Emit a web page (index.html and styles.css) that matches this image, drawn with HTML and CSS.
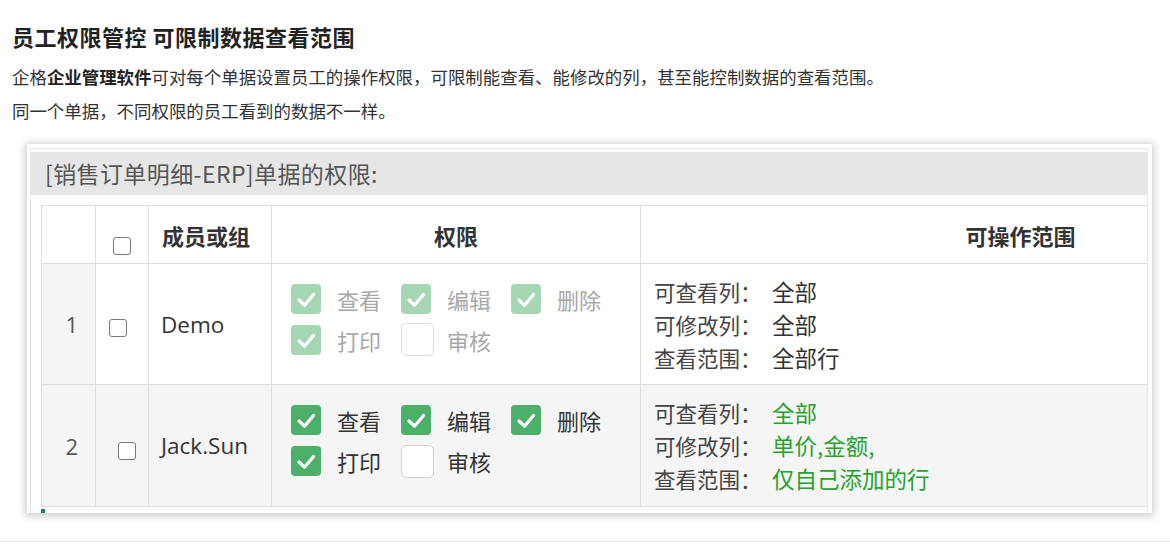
FILE: index.html
```html
<!DOCTYPE html>
<html lang="zh-CN">
<head>
<meta charset="utf-8">
<title>员工权限管控</title>
<link rel="stylesheet" href="styles.css">
</head>
<body>
<main class="page">
  <h1 class="title">员工权限管控 可限制数据查看范围</h1>
  <p class="desc">企格<strong>企业管理软件</strong>可对每个单据设置员工的操作权限，可限制能查看、能修改的列，甚至能控制数据的查看范围。</p>
  <p class="desc">同一个单据，不同权限的员工看到的数据不一样。</p>

  <div class="shot">
    <div class="window">
      <div class="bar">[销售订单明细-ERP]单据的权限:</div>
      <div class="table-wrap">
        <table class="perm">
          <colgroup>
            <col class="c-no"><col class="c-chk"><col class="c-name"><col class="c-perm"><col class="c-scope">
          </colgroup>
          <thead>
            <tr>
              <th class="no"></th>
              <th class="chk"><span class="sbox head-box"></span></th>
              <th class="name">成员或组</th>
              <th class="center">权限</th>
              <th class="center">可操作范围</th>
            </tr>
          </thead>
          <tbody>
            <tr class="r1">
              <td class="no">1</td>
              <td class="chk"><span class="sbox box-r1"></span></td>
              <td class="name">Demo</td>
              <td class="perms">
                <div class="grid faded">
                  <div class="item"><span class="gbox"><svg viewBox="0 0 30 30"><path d="M8 16 L13.5 21.2 L22.5 10.5"/></svg></span><span class="lbl">查看</span></div>
                  <div class="item"><span class="gbox"><svg viewBox="0 0 30 30"><path d="M8 16 L13.5 21.2 L22.5 10.5"/></svg></span><span class="lbl">编辑</span></div>
                  <div class="item"><span class="gbox"><svg viewBox="0 0 30 30"><path d="M8 16 L13.5 21.2 L22.5 10.5"/></svg></span><span class="lbl">删除</span></div>
                  <div class="item"><span class="gbox"><svg viewBox="0 0 30 30"><path d="M8 16 L13.5 21.2 L22.5 10.5"/></svg></span><span class="lbl">打印</span></div>
                  <div class="item"><span class="ebox"></span><span class="lbl">审核</span></div>
                </div>
              </td>
              <td class="scope">
                <div class="line"><span class="k">可查看列：</span><span class="v">全部</span></div>
                <div class="line"><span class="k">可修改列：</span><span class="v">全部</span></div>
                <div class="line"><span class="k">查看范围：</span><span class="v">全部行</span></div>
              </td>
            </tr>
            <tr class="r2">
              <td class="no">2</td>
              <td class="chk"><span class="sbox box-r2"></span></td>
              <td class="name">Jack.Sun</td>
              <td class="perms">
                <div class="grid">
                  <div class="item"><span class="gbox"><svg viewBox="0 0 30 30"><path d="M8 16 L13.5 21.2 L22.5 10.5"/></svg></span><span class="lbl">查看</span></div>
                  <div class="item"><span class="gbox"><svg viewBox="0 0 30 30"><path d="M8 16 L13.5 21.2 L22.5 10.5"/></svg></span><span class="lbl">编辑</span></div>
                  <div class="item"><span class="gbox"><svg viewBox="0 0 30 30"><path d="M8 16 L13.5 21.2 L22.5 10.5"/></svg></span><span class="lbl">删除</span></div>
                  <div class="item"><span class="gbox"><svg viewBox="0 0 30 30"><path d="M8 16 L13.5 21.2 L22.5 10.5"/></svg></span><span class="lbl">打印</span></div>
                  <div class="item"><span class="ebox"></span><span class="lbl">审核</span></div>
                </div>
              </td>
              <td class="scope">
                <div class="line"><span class="k">可查看列：</span><span class="v green">全部</span></div>
                <div class="line"><span class="k">可修改列：</span><span class="v green">单价,金额,</span></div>
                <div class="line"><span class="k">查看范围：</span><span class="v green">仅自己添加的行</span></div>
              </td>
            </tr>
          </tbody>
        </table>
        <div class="dot"></div>
      </div>
    </div>
  </div>
</main>
<div class="rule"></div>
</body>
</html>
```

FILE: styles.css
```css
html, body {
  margin: 0;
  padding: 0;
  background: #fff;
}
body {
  font-family: "Noto Sans CJK SC", "Noto Sans", sans-serif;
  color: #333;
  width: 1170px;
  overflow: hidden;
}
.page {
  padding: 0 12px;
}
.title {
  font-size: 22px;
  font-weight: 700;
  line-height: 30px;
  margin: 21px 0 9px;
  color: #222;
  letter-spacing: 0.5px;
}
.desc {
  font-size: 17.45px;
  line-height: 34px;
  margin: 0;
  color: #333;
}
.desc strong {
  font-weight: 700;
  color: #222;
}

.shot {
  margin: 16px 0 0 15px;
  width: 1125px;
  height: 369px;
  box-sizing: border-box;
  padding: 4px 4px 0 3px;
  background: #fff;
  box-shadow: 0 1px 8px 2px rgba(0, 0, 0, 0.2);
}
.window {
  height: 100%;
  box-sizing: border-box;
  border: 1px solid #e6e6e6;
  border-bottom: none;
  overflow: hidden;
}
.bar {
  margin-top: 3px;
  height: 43px;
  line-height: 43px;
  background: #e6e6e6;
  color: #555;
  font-size: 23px;
  letter-spacing: 0.4px;
  padding-left: 14px;
  white-space: nowrap;
}
.table-wrap {
  padding: 10px 0 0 10px;
}
.perm {
  border-collapse: collapse;
  table-layout: fixed;
  width: 1359px;
  font-size: 22px;
  color: #333;
}
.c-no { width: 54px; }
.c-chk { width: 53px; }
.c-name { width: 123px; }
.c-perm { width: 369px; }
.c-scope { width: 760px; }

.perm th, .perm td {
  border: 1px solid #dedede;
  padding: 0;
  vertical-align: middle;
}
.perm thead tr { height: 58px; }
.perm th {
  font-weight: 700;
  color: #333;
  background: #fff;
}
.perm th.name { text-align: left; padding-left: 13px; }
.perm th.center { text-align: center; }
.perm th.chk { padding-top: 14px; }

.r1 { height: 121px; background: #fff; }
.r2 { height: 122px; background: #f5f5f5; }
.r1 td.no { background: #f5f5f5; }

td.no {
  font-family: "Open Sans", "Noto Sans", sans-serif;
  color: #555;
  text-align: right;
  padding-right: 17px;
}
td.chk, th.chk { text-align: center; }
td.name {
  font-family: "Open Sans", "Noto Sans", sans-serif;
  font-size: 22.5px;
  color: #333;
  padding-left: 12px;
  white-space: nowrap;
}

.sbox {
  display: inline-block;
  width: 18px;
  height: 18px;
  box-sizing: border-box;
  border: 1.5px solid #7a7a7a;
  border-radius: 3px;
  background: #fff;
  vertical-align: middle;
}
.box-r1 { margin-left: -9px; }
.box-r2 { margin-left: 9px; margin-top: 2px; }

td.perms {
  padding: 0 0 10px 19px;
}
.grid {
  display: grid;
  grid-template-columns: repeat(3, 90px);
  column-gap: 20px;
  row-gap: 11px;
}
.item {
  display: flex;
  align-items: center;
  gap: 16px;
  height: 30px;
}
.lbl {
  font-size: 22px;
  line-height: 30px;
  color: #333;
  white-space: nowrap;
}
.gbox {
  width: 30px;
  height: 30px;
  flex: none;
  border-radius: 4px;
  background: #4caf6a;
  display: flex;
}
.gbox svg {
  width: 30px;
  height: 30px;
}
.gbox path {
  fill: none;
  stroke: #fff;
  stroke-width: 3.2;
  stroke-linecap: round;
  stroke-linejoin: round;
}
.ebox {
  width: 33px;
  height: 33px;
  flex: none;
  box-sizing: border-box;
  border: 1px solid #d2d2d2;
  border-radius: 5px;
  background: #fff;
  margin-right: -3px;
}
.faded .gbox { background: #a6d7b4; }
.faded .lbl { color: #a8a8a8; }
.faded .ebox { border-color: #dedede; }

td.scope {
  padding-left: 13px;
}
.line {
  font-size: 21.5px;
  line-height: 32px;
  white-space: nowrap;
}
.k {
  display: inline-block;
  width: 118px;
  color: #444;
}
.v { color: #333; font-size: 22.5px; }
.v.green { color: #27a22f; }

.dot {
  width: 4px;
  height: 4px;
  margin-top: 2px;
  background: #0b8a78;
}

.rule {
  margin-top: 28px;
  height: 1px;
  background: #e8e8e8;
}
```
